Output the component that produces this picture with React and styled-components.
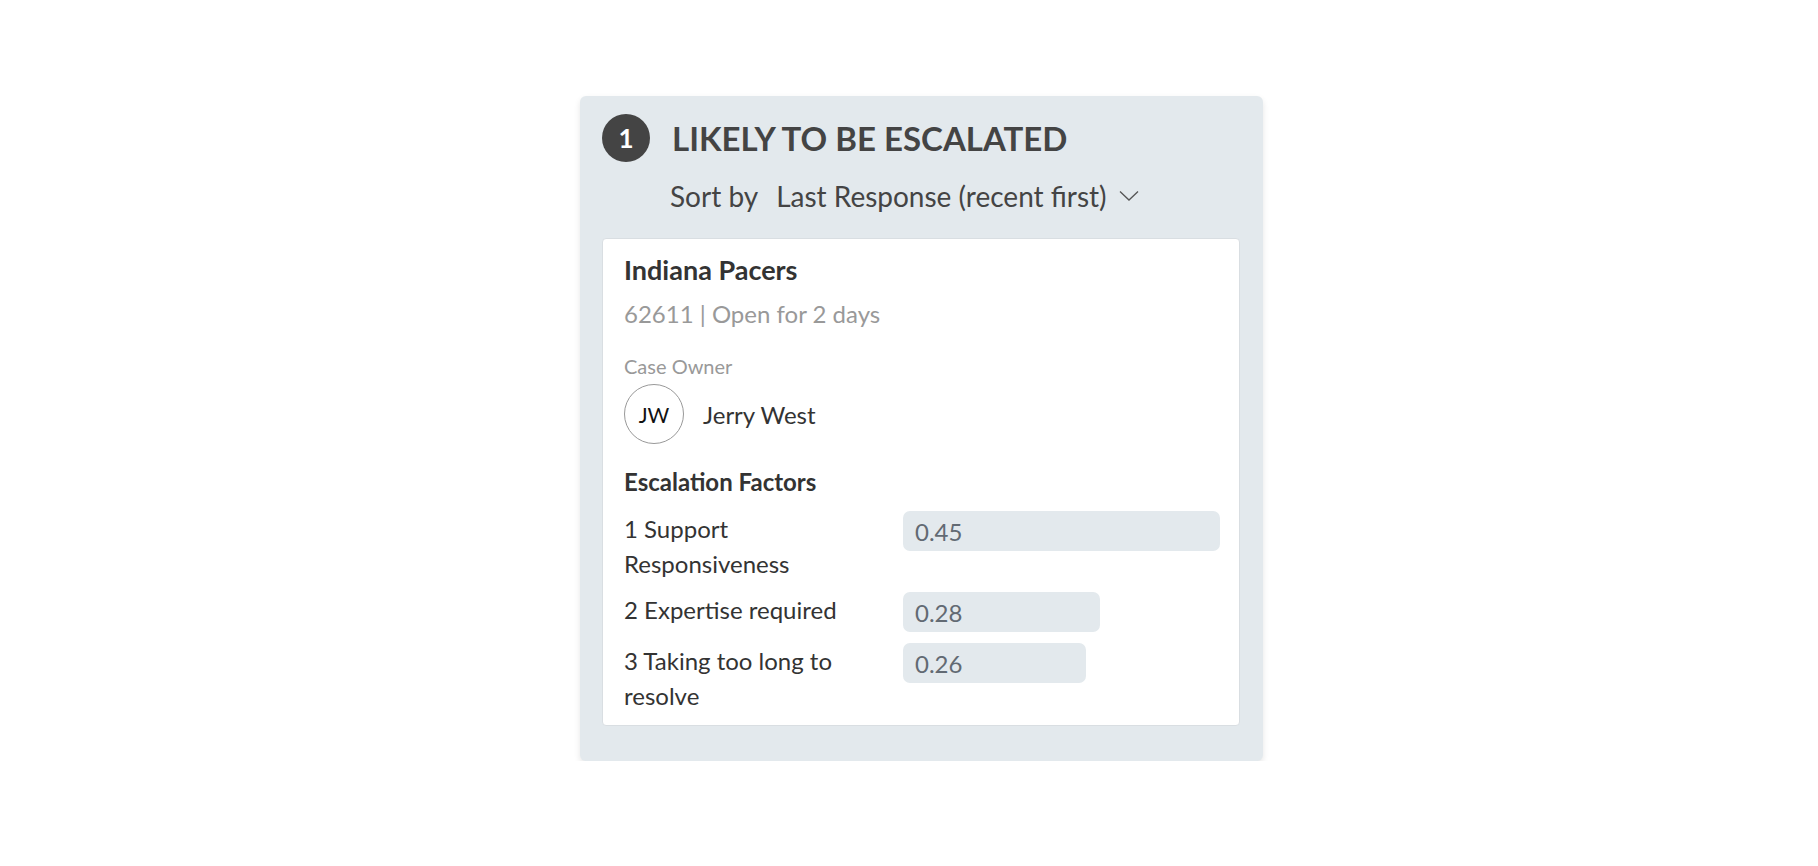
import styled, { createGlobalStyle } from "styled-components";
import { Fragment } from "react";

const GlobalStyle = createGlobalStyle`
  body {
    margin: 0;
    background: #ffffff;
    font-family: Lato, "Noto Sans", "Liberation Sans", sans-serif;
    color: #333333;
  }
`;

const Page = styled.div`
  display: flex;
  padding: 96px 0 0 580px;
`;

const Panel = styled.section`
  width: 683px;
  box-sizing: border-box;
  background: #e3e9ed;
  border-radius: 6px;
  box-shadow: 0 3px 6px rgba(0, 0, 0, 0.1);
  padding: 18px 23px 35px 22px;
`;

const Header = styled.div`
  display: flex;
  align-items: center;
  gap: 22px;
`;

const Badge = styled.div`
  width: 48px;
  height: 48px;
  border-radius: 50%;
  background: #444444;
  color: #ffffff;
  display: flex;
  align-items: center;
  justify-content: center;
  font-size: 26px;
  font-weight: 700;
`;

const Title = styled.h2`
  margin: 0;
  font-size: 33px;
  font-weight: 700;
  color: #444444;
  line-height: 1;
`;

const SortRow = styled.div`
  display: flex;
  align-items: center;
  margin: 17px 0 0 68px;
  font-size: 28px;
  color: #444444;
`;

const SortValue = styled.button`
  display: flex;
  align-items: center;
  gap: 12px;
  margin-left: 18px;
  padding: 0;
  border: none;
  background: none;
  font: inherit;
  color: inherit;
`;

const Card = styled.div`
  margin-top: 25px;
  background: #ffffff;
  border: 1px solid #d9dee2;
  border-radius: 4px;
  padding: 14px 19px 12px 21px;
`;

const Name = styled.div`
  font-size: 27px;
  font-weight: 700;
  color: #333333;
`;

const Meta = styled.div`
  margin-top: 13px;
  font-size: 24px;
  color: #999999;
`;

const Label = styled.div`
  margin-top: 26px;
  font-size: 20px;
  color: #999999;
`;

const Owner = styled.div`
  display: flex;
  align-items: center;
  gap: 19px;
  margin-top: 6px;
  font-size: 24px;
`;

const Avatar = styled.div`
  width: 58px;
  height: 58px;
  border-radius: 50%;
  border: 1px solid #999999;
  display: flex;
  align-items: center;
  justify-content: center;
  font-size: 21px;
  color: #111111;
`;

const SectionTitle = styled.div`
  margin-top: 23px;
  font-size: 24px;
  font-weight: 700;
`;

const Factors = styled.div`
  display: grid;
  grid-template-columns: 262px 1fr;
  column-gap: 17px;
  row-gap: 11px;
  margin-top: 15px;
  font-size: 24px;
  line-height: 35px;
`;

const FactorName = styled.div``;

const Track = styled.div`
  display: flex;
`;

const Bar = styled.div`
  height: 40px;
  box-sizing: border-box;
  border-radius: 7px;
  background: #e3e9ed;
  color: #626a73;
  padding-left: 12px;
  display: flex;
  align-items: center;
`;

const factors = [
  { name: "1 Support Responsiveness", value: 0.45 },
  { name: "2 Expertise required", value: 0.28 },
  { name: "3 Taking too long to resolve", value: 0.26 },
];

const max = Math.max(...factors.map((f) => f.value));

const Chevron = () => (
  <svg width="20" height="12" viewBox="0 0 20 12">
    <polyline points="1,1.5 10,10 19,1.5" fill="none" stroke="#555" strokeWidth="1.3" />
  </svg>
);

export default function App() {
  return (
    <Page>
      <GlobalStyle />
      <Panel>
        <Header>
          <Badge>1</Badge>
          <Title>LIKELY TO BE ESCALATED</Title>
        </Header>
        <SortRow>
          Sort by
          <SortValue>
            Last Response (recent first)
            <Chevron />
          </SortValue>
        </SortRow>
        <Card>
          <Name>Indiana Pacers</Name>
          <Meta>62611 | Open for 2 days</Meta>
          <Label>Case Owner</Label>
          <Owner>
            <Avatar>JW</Avatar>
            Jerry West
          </Owner>
          <SectionTitle>Escalation Factors</SectionTitle>
          <Factors>
            {factors.map((f) => (
              <Fragment key={f.name}>
                <FactorName>{f.name}</FactorName>
                <Track>
                  <Bar style={{ width: `${(f.value / max) * 100}%` }}>{f.value.toFixed(2)}</Bar>
                </Track>
              </Fragment>
            ))}
          </Factors>
        </Card>
      </Panel>
    </Page>
  );
}
